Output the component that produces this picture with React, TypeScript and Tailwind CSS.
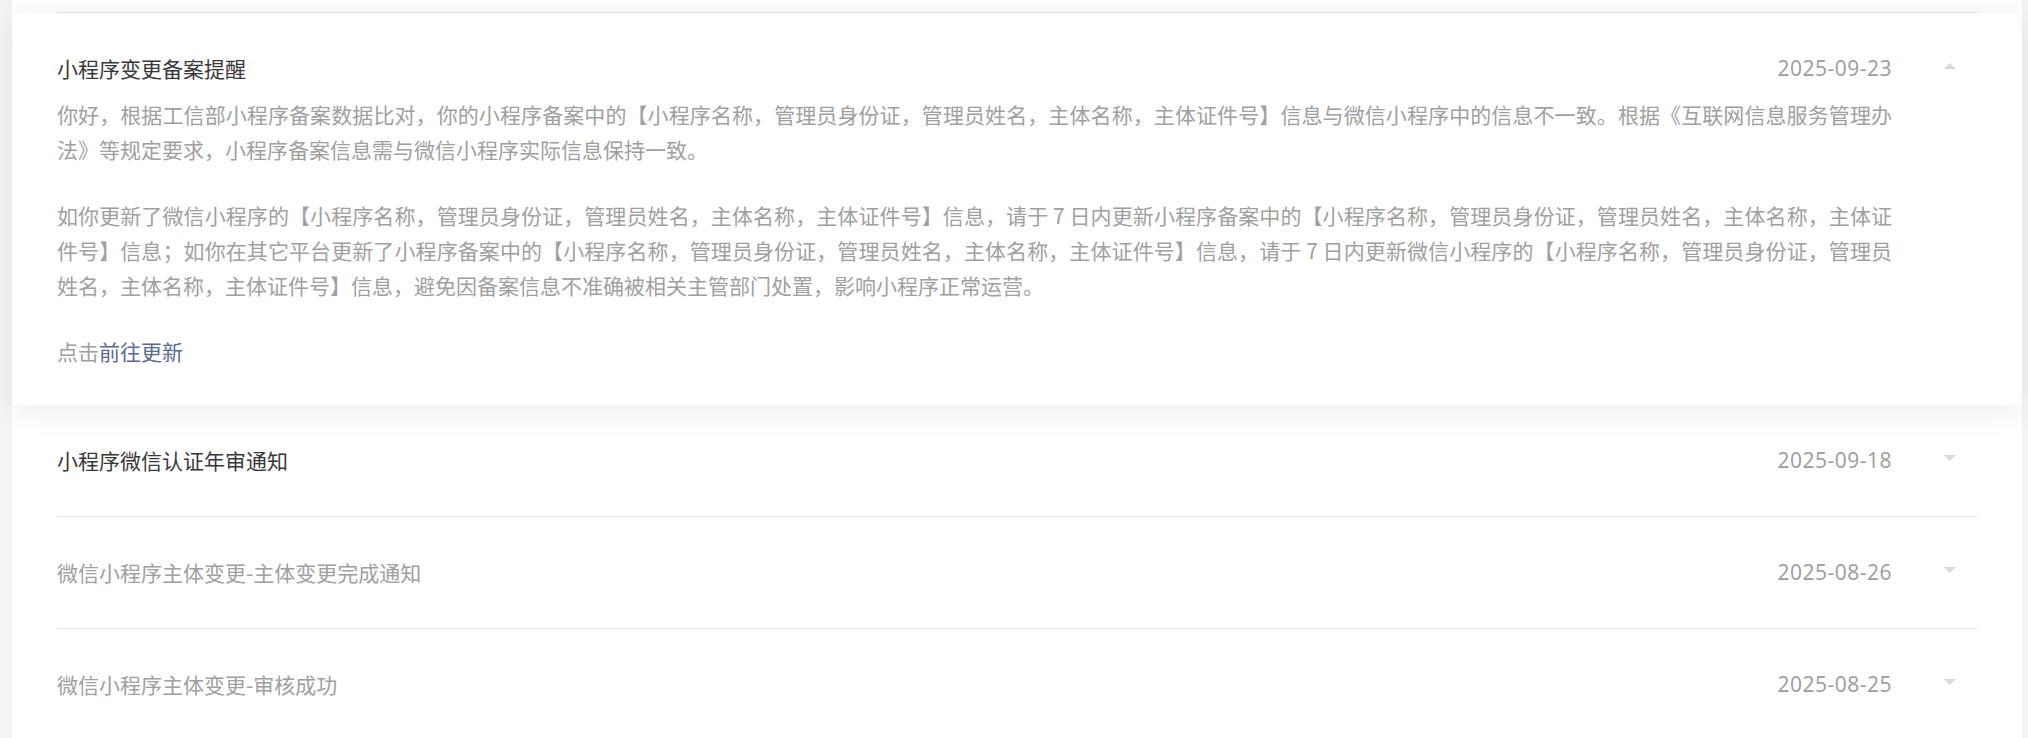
import React, { useState } from 'react';

interface Notice {
  id: number;
  title: string;
  date: string;
  unread: boolean;
  paragraphs?: string[];
  linkText?: string;
}

const notices: Notice[] = [
  {
    id: 1,
    title: '小程序变更备案提醒',
    date: '2025-09-23',
    unread: true,
    paragraphs: [
      '你好，根据工信部小程序备案数据比对，你的小程序备案中的【小程序名称，管理员身份证，管理员姓名，主体名称，主体证件号】信息与微信小程序中的信息不一致。根据《互联网信息服务管理办法》等规定要求，小程序备案信息需与微信小程序实际信息保持一致。',
      '如你更新了微信小程序的【小程序名称，管理员身份证，管理员姓名，主体名称，主体证件号】信息，请于 7 日内更新小程序备案中的【小程序名称，管理员身份证，管理员姓名，主体名称，主体证件号】信息；如你在其它平台更新了小程序备案中的【小程序名称，管理员身份证，管理员姓名，主体名称，主体证件号】信息，请于 7 日内更新微信小程序的【小程序名称，管理员身份证，管理员姓名，主体名称，主体证件号】信息，避免因备案信息不准确被相关主管部门处置，影响小程序正常运营。',
    ],
    linkText: '前往更新',
  },
  { id: 2, title: '小程序微信认证年审通知', date: '2025-09-18', unread: true },
  { id: 3, title: '微信小程序主体变更-主体变更完成通知', date: '2025-08-26', unread: false },
  { id: 4, title: '微信小程序主体变更-审核成功', date: '2025-08-25', unread: false },
];

const cjk = { fontFamily: '"Noto Sans CJK SC", "Noto Sans", sans-serif' };
const latin = { fontFamily: '"Open Sans", "Noto Sans CJK SC", sans-serif' };

const Caret: React.FC<{ up: boolean }> = ({ up }) => (
  <svg width="12" height="6" viewBox="0 0 12 6" className="-translate-y-[3px]">
    {up ? <polygon points="0,6 6,0 12,6" fill="#dadada" /> : <polygon points="0,0 12,0 6,6" fill="#dadada" />}
  </svg>
);

const NoticeHeader: React.FC<{ notice: Notice; open: boolean }> = ({ notice, open }) => (
  <div className="flex items-center h-[35px]">
    <div
      className={`flex-1 text-[21px] leading-[35px] whitespace-nowrap ${notice.unread ? 'text-[#383838]' : 'text-[#a0a0a0]'}`}
      style={cjk}
    >
      {notice.title}
    </div>
    <div className="text-[21px] leading-[35px] tracking-[0.5px] text-[#9c9c9c]" style={latin}>
      {notice.date}
    </div>
    <div className="w-[85px] flex justify-end pr-[21px]">
      <Caret up={open} />
    </div>
  </div>
);

export default function App() {
  const [openId, setOpenId] = useState<number>(1);

  return (
    <div className="h-[738px] overflow-hidden bg-[#f3f4f6] pl-[12px] pr-[6px]">
      <div className="h-full bg-white">
        {/* tail of the previous item, scrolled out of view */}
        <div className="mx-[45px] h-[13px] border-b border-[#e6e6e6]" />

        {notices.map((notice) => {
          const open = notice.id === openId;
          if (open) {
            return (
              <div
                key={notice.id}
                className="bg-white px-[45px] pt-[38px] pb-[36px] shadow-[0_4px_32px_0_rgba(0,0,0,0.08)] cursor-pointer"
                onClick={() => setOpenId(0)}
              >
                <NoticeHeader notice={notice} open />
                <div className="pr-[85px] mt-[11px] text-[21px] leading-[35px] text-[#a0a0a0] text-justify" style={cjk}>
                  {notice.paragraphs?.map((p, i) => (
                    <p key={i} className={i > 0 ? 'mt-[31px]' : ''}>
                      {p}
                    </p>
                  ))}
                  <p className="mt-[31px] text-left">
                    点击<a className="text-[#576b95] cursor-pointer">{notice.linkText}</a>
                  </p>
                </div>
              </div>
            );
          }
          return (
            <div
              key={notice.id}
              className="mx-[45px] pt-[38px] pb-[38px] border-b border-[#e6e6e6] cursor-pointer"
              onClick={() => setOpenId(notice.id)}
            >
              <NoticeHeader notice={notice} open={false} />
            </div>
          );
        })}
      </div>
    </div>
  );
}
